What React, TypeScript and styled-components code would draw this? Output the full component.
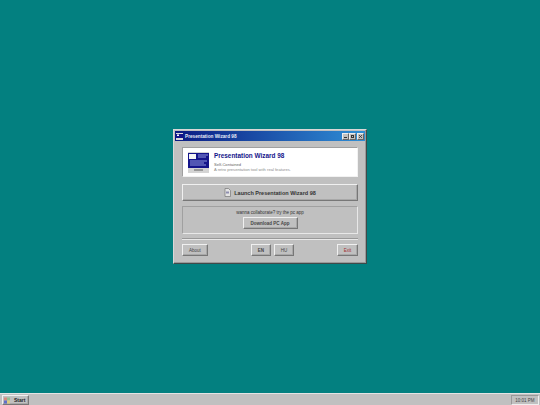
import React from "react";
import styled, {createGlobalStyle, css} from "styled-components";

const GlobalStyle = createGlobalStyle`
  html, body, #root {
    margin: 0;
    padding: 0;
    width: 100%;
    height: 100%;
    overflow: hidden;
  }
  body {
    font-family: "Liberation Sans", Arial, sans-serif;
    background: #038080;
  }
`;

const raised = css`
  border: 1px solid;
  border-color: #f0f0f0 #777 #777 #f0f0f0;
  box-shadow: inset -1px -1px 0 #a8a8a8;
`;

const Desktop = styled.div`
  width: 540px;
  height: 405px;
  display: flex;
  flex-direction: column;
`;

const WindowArea = styled.main`
  flex: 1;
  display: flex;
  align-items: center;
  justify-content: center;
`;

const Window = styled.section`
  width: 194px;
  height: 135px;
  box-sizing: border-box;
  background: #c0c0c0;
  padding: 1px;
  border: 1px solid;
  border-color: #d8d8d8 #3f4a4a #3f4a4a #d8d8d8;
  box-shadow: inset -1px -1px 0 #9a9a9a;
  display: flex;
  flex-direction: column;
`;

const TitleBar = styled.header`
  height: 10px;
  flex-shrink: 0;
  display: flex;
  align-items: center;
  gap: 2px;
  padding: 0 1px;
  background: linear-gradient(90deg, #0a1a82, #2f8fd6);
`;

const TitleText = styled.span`
  flex: 1;
  color: #e8ecf8;
  font-size: 4.7px;
  font-weight: 700;
  white-space: nowrap;
`;

const WinButtons = styled.div`
  display: flex;
  align-items: center;
`;

const WinButton = styled.button<{$gap?: boolean}>`
  width: 7px;
  height: 7px;
  padding: 0;
  margin-left: ${p => (p.$gap ? "1px" : "0")};
  box-sizing: border-box;
  background: #c0c0c0;
  border: 1px solid;
  border-color: #eee #666 #666 #eee;
  display: flex;
  align-items: center;
  justify-content: center;
  svg {
    display: block;
  }
`;

const Body = styled.div`
  flex: 1;
  display: flex;
  flex-direction: column;
  padding: 6px 7px 7px;
`;

const Hero = styled.div`
  height: 30px;
  box-sizing: border-box;
  background: #fff;
  border: 1px solid;
  border-color: #a0a0a0 #f2f2f2 #f2f2f2 #a0a0a0;
  display: flex;
  align-items: center;
  gap: 5px;
  padding: 0 4px 0 5px;
`;

const HeroText = styled.div`
  display: flex;
  flex-direction: column;
`;

const HeroTitle = styled.h1`
  margin: 0 0 2px;
  font-size: 6.4px;
  line-height: 8px;
  font-weight: 700;
  color: #14148a;
  white-space: nowrap;
`;

const HeroSub = styled.p`
  margin: 0;
  font-size: 4.1px;
  line-height: 5px;
  color: #666;
  white-space: nowrap;
`;

const HeroDesc = styled(HeroSub)`
  color: #8c8c8c;
`;

const LaunchButton = styled.button`
  ${raised};
  margin-top: 7px;
  height: 17px;
  flex-shrink: 0;
  background: #c0c0c0;
  padding: 0;
  display: flex;
  align-items: center;
  justify-content: center;
  gap: 3px;
  font-family: inherit;
  font-size: 5.5px;
  font-weight: 700;
  color: #333;
`;

const Group = styled.div`
  margin-top: 5px;
  height: 28px;
  box-sizing: border-box;
  flex-shrink: 0;
  border: 1px solid;
  border-color: #a0a0a0 #e8e8e8 #e8e8e8 #a0a0a0;
  display: flex;
  flex-direction: column;
  align-items: center;
  padding-top: 3px;
`;

const GroupText = styled.span`
  font-size: 4.5px;
  line-height: 6px;
  color: #333;
`;

const Btn = styled.button<{$w: number; $bold?: boolean; $danger?: boolean}>`
  ${raised};
  width: ${p => p.$w}px;
  height: 12px;
  padding: 0;
  background: #c0c0c0;
  font-family: inherit;
  font-size: 4.5px;
  font-weight: ${p => (p.$bold ? 700 : 400)};
  color: ${p => (p.$danger ? "#a03030" : "#444")};
`;

const GroupButton = styled(Btn)`
  margin-top: 1px;
`;

const Divider = styled.hr`
  width: 100%;
  margin: 4px 0 4px;
  border: 0;
  border-top: 1px solid #999;
  border-bottom: 1px solid #e8e8e8;
`;

const Footer = styled.footer`
  display: flex;
  align-items: center;
  justify-content: space-between;
`;

const LangRow = styled.div`
  display: flex;
  gap: 3px;
`;

const TaskBar = styled.footer`
  height: 12px;
  box-sizing: border-box;
  flex-shrink: 0;
  background: #c0c0c0;
  border-top: 1px solid #e4e4e4;
  display: flex;
  align-items: center;
  justify-content: space-between;
  padding: 1px 1px 0 2px;
`;

const StartButton = styled.button`
  ${raised};
  width: 27px;
  height: 10px;
  padding: 0 0 0 1px;
  background: #c0c0c0;
  display: flex;
  align-items: center;
  gap: 4px;
  font-family: inherit;
  font-size: 5px;
  font-weight: 700;
  color: #222;
`;

const Clock = styled.div`
  width: 28px;
  height: 10px;
  box-sizing: border-box;
  border: 1px solid;
  border-color: #999 #eee #eee #999;
  display: flex;
  align-items: center;
  justify-content: center;
  font-size: 4.5px;
  color: #444;
`;

const AppIcon = () => (
  <svg width="21" height="21" viewBox="0 0 21 21">
    <rect width="21" height="21" fill="#d4d4d4" />
    <rect x="0" y="1" width="21" height="15" fill="#14148a" />
    <rect x="1" y="2" width="7" height="5" fill="#f4f4f4" />
    <path d="M10 3h10M10 5h8M2 9h17M2 11h14M2 13h16" stroke="#8f98de" strokeWidth="1" />
    <rect x="6" y="17" width="9" height="2" fill="#999" />
  </svg>
);

const SmallIcon = () => (
  <svg width="7" height="7" viewBox="0 0 7 7">
    <rect width="7" height="7" fill="#d8d8d8" />
    <rect y="1" width="7" height="4" fill="#14148a" />
    <rect x="1" y="1.5" width="2" height="1.5" fill="#fff" />
  </svg>
);

const LaunchIcon = () => (
  <svg width="7" height="9" viewBox="0 0 7 9">
    <path d="M1 .5h3.5L6.5 2.5v6H1z" fill="#e4e4e4" stroke="#777" strokeWidth=".7" />
    <rect x="2" y="3.5" width="3" height="2" fill="#8f8fb0" />
  </svg>
);

const WinLogo = () => (
  <svg width="6" height="7" viewBox="0 0 6 7">
    <rect y=".5" width="3" height="3" fill="#d88a80" />
    <rect x="3" y=".5" width="3" height="3" fill="#94c094" />
    <rect y="3.5" width="3" height="3" fill="#6070c8" />
    <rect x="3" y="3.5" width="3" height="3" fill="#dccb80" />
  </svg>
);

export default function App() {
  return (
    <Desktop>
      <GlobalStyle />
      <WindowArea>
        <Window>
          <TitleBar>
            <SmallIcon />
            <TitleText>Presentation Wizard 98</TitleText>
            <WinButtons>
              <WinButton>
                <svg width="3" height="4" viewBox="0 0 3 4"><rect y="3" width="3" height="1" fill="#333" /></svg>
              </WinButton>
              <WinButton>
                <svg width="3" height="3" viewBox="0 0 3 3"><rect x=".5" y=".5" width="2" height="2" fill="none" stroke="#333" /></svg>
              </WinButton>
              <WinButton $gap>
                <svg width="3" height="3" viewBox="0 0 3 3"><path d="M0 0l3 3M3 0L0 3" stroke="#333" strokeWidth=".8" /></svg>
              </WinButton>
            </WinButtons>
          </TitleBar>
          <Body>
            <Hero>
              <AppIcon />
              <HeroText>
                <HeroTitle>Presentation Wizard 98</HeroTitle>
                <HeroSub>Self-Contained</HeroSub>
                <HeroDesc>A retro presentation tool with real features.</HeroDesc>
              </HeroText>
            </Hero>
            <LaunchButton>
              <LaunchIcon />
              Launch Presentation Wizard 98
            </LaunchButton>
            <Group>
              <GroupText>wanna collaborate? try the pc app</GroupText>
              <GroupButton $w={55} $bold>Download PC App</GroupButton>
            </Group>
            <Divider />
            <Footer>
              <Btn $w={26}>About</Btn>
              <LangRow>
                <Btn $w={20} $bold>EN</Btn>
                <Btn $w={20}>HU</Btn>
              </LangRow>
              <Btn $w={21} $danger>Exit</Btn>
            </Footer>
          </Body>
        </Window>
      </WindowArea>
      <TaskBar>
        <StartButton>
          <WinLogo />
          Start
        </StartButton>
        <Clock>10:01 PM</Clock>
      </TaskBar>
    </Desktop>
  );
}
